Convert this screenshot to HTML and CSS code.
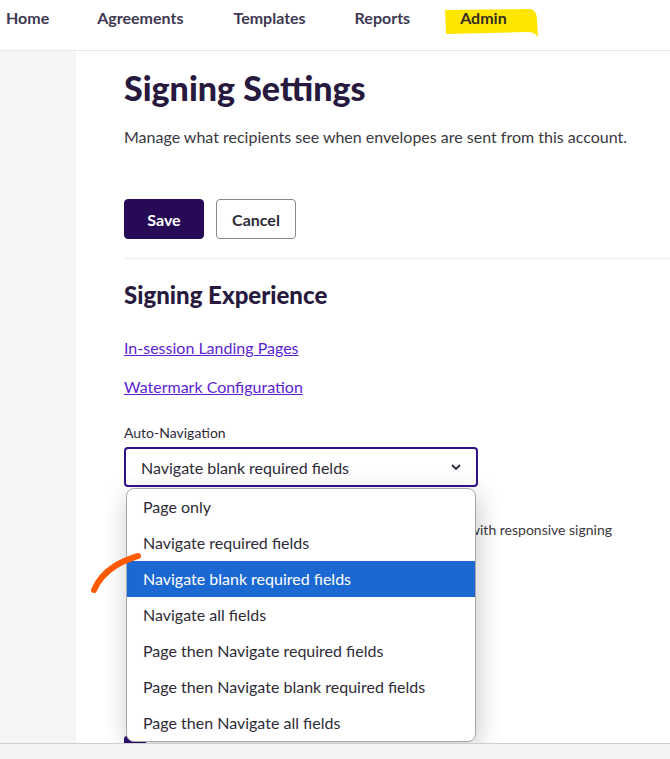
FILE: index.html
```html
<!DOCTYPE html>
<html lang="en">
<head>
  <meta charset="UTF-8">
  <meta name="viewport" content="width=device-width, initial-scale=1.0">
  <title>Signing Settings</title>
  <link rel="stylesheet" href="styles.css">
</head>

<body>
  <div class="topnav">
    <a class="nav-item">Home</a>
    <a class="nav-item">Agreements</a>
    <a class="nav-item">Templates</a>
    <a class="nav-item">Reports</a>
    <a class="nav-item admin">
      <svg class="marker" width="96" height="32" viewBox="0 0 96 32">
        <path d="M2 2 L88 1 Q94 3 94 12 L95 29 Q92 24 84 24 L3 26 Z" fill="#ffe600"/>
      </svg>
      <span>Admin</span>
    </a>
  </div>

  <div class="layout">
    <div class="sidebar"></div>
    <div class="content">
      <h1 class="title">Signing Settings</h1>
      <p class="lead">Manage what recipients see when envelopes are sent from this account.</p>

      <div class="actions">
        <button class="btn btn-primary">Save</button>
        <button class="btn btn-default">Cancel</button>
      </div>

      <div class="section">
        <h2 class="section-title">Signing Experience</h2>
        <a class="link">In-session Landing Pages</a>
        <a class="link">Watermark Configuration</a>

        <div class="field">
          <label class="field-label">Auto-Navigation</label>
          <div class="select-wrap">
            <div class="select">
              <span>Navigate blank required fields</span>
              <svg class="chevron" width="10" height="6" viewBox="0 0 10 6">
                <path d="M1 1 L5 5 L9 1" fill="none" stroke="#2b2540" stroke-width="1.8"/>
              </svg>
            </div>
            <ul class="options">
              <li>Page only</li>
              <li>Navigate required fields</li>
              <li class="selected">Navigate blank required fields</li>
              <li>Navigate all fields</li>
              <li>Page then Navigate required fields</li>
              <li>Page then Navigate blank required fields</li>
              <li>Page then Navigate all fields</li>
            </ul>
          </div>
        </div>

        <div class="check-row">
          <span class="note">with responsive signing</span>
        </div>
        <div class="check-row second">
          <span class="check-box"></span>
        </div>
      </div>
    </div>
  </div>

  <div class="bottom-bar"></div>

  <svg class="scribble" width="60" height="50" viewBox="0 0 60 50">
    <path d="M50 5 C38 9 16 16 6 39" fill="none" stroke="#ff5a00" stroke-width="6" stroke-linecap="round"/>
  </svg>
</body>
</html>
```

FILE: styles.css
```css
*{
  margin: 0;
  padding: 0;
  box-sizing: border-box;
}
html, body{
  height: 759px;
  overflow: hidden;
}
body{
  font-family: Lato, "Noto Sans", sans-serif;
  color: #2e2b38;
  background: #fff;
  position: relative;
}
li{
  list-style: none;
}

/* top navigation */
.topnav{
  height: 51px;
  display: flex;
  align-items: flex-start;
  padding-top: 8px;
  padding-left: 6px;
  border-bottom: 1px solid #e8e8e8;
}
.nav-item{
  font-size: 16px;
  font-weight: 700;
  color: #3e3852;
  margin-right: 48px;
  line-height: 20px;
  position: relative;
}
.nav-item:nth-child(2){
  margin-right: 50px;
}
.nav-item:nth-child(3){
  margin-right: 49px;
}
.nav-item:nth-child(4){
  margin-right: 50px;
}
.admin span{
  position: relative;
  color: #352e22;
}
.marker{
  position: absolute;
  left: -17px;
  top: 0;
}

/* body */
.layout{
  display: flex;
  height: 692px;
}
.sidebar{
  width: 76px;
  background: #f5f5f5;
}
.content{
  flex: 1;
  padding-left: 48px;
  padding-top: 17px;
  overflow: hidden;
}
.title{
  font-size: 34px;
  font-weight: 900;
  color: #28193f;
  line-height: 40px;
}
.lead{
  font-size: 16px;
  color: #3a3840;
  margin-top: 19px;
  line-height: 20px;
}
.actions{
  display: flex;
  gap: 12px;
  margin-top: 52px;
  padding-bottom: 19px;
  border-bottom: 1px solid #eeeeee;
}
.btn{
  width: 80px;
  height: 40px;
  border-radius: 4px;
  font-family: inherit;
  font-size: 16px;
  font-weight: 700;
}
.btn-primary{
  background: #260a55;
  border: 1px solid #260a55;
  color: #fff;
}
.btn-default{
  background: #fff;
  border: 1px solid #8a8790;
  color: #2e2b38;
}

.section{
  padding-top: 22px;
}
.section-title{
  font-size: 24px;
  font-weight: 900;
  color: #28193f;
  line-height: 28px;
  margin-bottom: 29px;
}
.link{
  display: block;
  font-size: 16px;
  color: #5b22d4;
  text-decoration: underline;
  line-height: 20px;
  margin-bottom: 19px;
}
.field{
  margin-top: 28px;
}
.field-label{
  display: block;
  font-size: 14px;
  color: #2e2b38;
  line-height: 16px;
  margin-bottom: 6px;
}
.select-wrap{
  position: relative;
  width: 354px;
}
.select{
  height: 40px;
  border: 2px solid #33118a;
  border-radius: 4px;
  display: flex;
  align-items: center;
  justify-content: space-between;
  padding: 0 15px 0 15px;
  font-size: 16px;
  color: #2e2b38;
}
.options{
  position: absolute;
  top: 41px;
  left: 2px;
  width: 350px;
  background: #fff;
  border: 1px solid #a9a9ad;
  border-radius: 8px;
  overflow: hidden;
  box-shadow: 2px 6px 24px rgba(0,0,0,0.22);
  z-index: 2;
}
.options li{
  height: 36px;
  line-height: 36px;
  padding-left: 16px;
  font-size: 16px;
  color: #2e2b38;
}
.options li.selected{
  background: #1b68d3;
  color: #fff;
}

.check-row{
  display: flex;
  align-items: center;
  gap: 10px;
  margin-top: 34px;
  font-size: 14px;
  color: #3a3840;
}
.check-row .note{
  padding-left: 345px;
}
.check-row.second{
  margin-top: 198px;
}
.check-box{
  width: 22px;
  height: 22px;
  background: #2e0f73;
  border-radius: 3px;
}

.bottom-bar{
  height: 16px;
  border-top: 1px solid #cfcfcf;
  background: #f4f4f4;
}

/* hand drawn annotation */
.scribble{
  position: absolute;
  left: 88px;
  top: 551px;
  z-index: 5;
}
```
